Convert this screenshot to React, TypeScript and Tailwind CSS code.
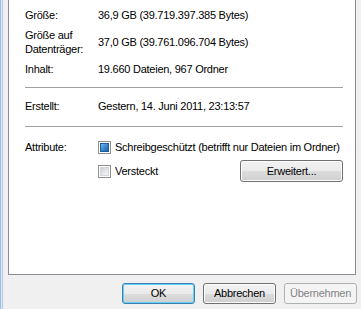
const font = { fontFamily: '"Liberation Sans", Arial, sans-serif', letterSpacing: "-0.25px" };

const Row = ({ label, children }: { label: React.ReactNode; children: React.ReactNode }) => (
  <div className="flex items-center whitespace-nowrap">
    <div className="w-[73px] shrink-0 leading-[14px]">{label}</div>
    <div className="leading-[14px]">{children}</div>
  </div>
);

const Checkbox = ({ checked }: { checked?: boolean }) => (
  <div className="w-[13px] h-[13px] shrink-0 border border-[#8e8f8f] bg-white p-[1px]">
    {checked ? (
      <div className="w-full h-full border border-[#1d5b9f] bg-gradient-to-br from-[#74b8ea] via-[#3f88d0] to-[#2263ab]" />
    ) : (
      <div className="w-full h-full border border-[#d2d5d9] bg-gradient-to-br from-[#cdd1d6] to-[#f7f7f7]" />
    )}
  </div>
);

const Button = ({
  children,
  variant = "normal",
  className = "",
}: {
  children: React.ReactNode;
  variant?: "normal" | "default" | "disabled";
  className?: string;
}) => {
  const styles = {
    normal:
      "border-[#707070] text-black bg-[linear-gradient(#f2f2f2_0%,#ebebeb_50%,#dddddd_50%,#cfcfcf_100%)] shadow-[inset_0_0_0_1px_#fcfcfc]",
    default:
      "border-[#3c7fb1] text-black bg-[linear-gradient(#f2f2f2_0%,#ebebeb_50%,#dddddd_50%,#cfcfcf_100%)] shadow-[inset_0_0_0_1px_#62d1f7]",
    disabled: "border-[#adb2b5] text-[#838383] bg-[#f4f4f4]",
  };
  return (
    <button
      type="button"
      className={`h-[21px] border rounded-[3px] text-[11px] leading-none flex items-center justify-center ${styles[variant]} ${className}`}
      style={font}
    >
      {children}
    </button>
  );
};

export default function App() {
  return (
    <div className="w-[361px] h-[309px] flex overflow-hidden text-[11px] text-black" style={font}>
      {/* window frame */}
      <div className="w-[3px] flex shrink-0">
        <div className="w-px bg-[#9fbcdc]" />
        <div className="w-px bg-[#dbe8f6]" />
        <div className="w-px bg-[#b4cbe5]" />
      </div>

      <div className="flex-1 flex flex-col bg-[#f0f0f0] pl-[5px]">
        {/* tab panel */}
        <div className="w-[348px] h-[275px] shrink-0 bg-white border-x border-b border-[#898c95] pl-[16px] pr-[12px] pt-[8px]">
          <Row label="Größe:">36,9 GB (39.719.397.385 Bytes)</Row>
          <div className="mt-[6px]">
            <Row
              label={
                <>
                  Größe auf
                  <br />
                  Datenträger:
                </>
              }
            >
              37,0 GB (39.761.096.704 Bytes)
            </Row>
          </div>
          <div className="mt-[6px]">
            <Row label="Inhalt:">19.660 Dateien, 967 Ordner</Row>
          </div>

          <div className="mt-[11px] h-px bg-[#a0a0a0]" />

          <div className="mt-[11px]">
            <Row label="Erstellt:">Gestern, 14. Juni 2011, 23:13:57</Row>
          </div>

          <div className="mt-[13px] h-px bg-[#a0a0a0]" />

          <div className="mt-[13px] flex items-center h-[14px] whitespace-nowrap">
            <div className="w-[73px] shrink-0 leading-[14px]">Attribute:</div>
            <Checkbox checked />
            <span className="ml-[4px] leading-[14px]">Schreibgeschützt (betrifft nur Dateien im Ordner)</span>
          </div>

          <div className="mt-[6px] flex items-center h-[22px]">
            <div className="w-[73px] shrink-0" />
            <Checkbox />
            <span className="ml-[4px] leading-[14px]">Versteckt</span>
            <Button className="ml-auto w-[103px] h-[22px]">Erweitert...</Button>
          </div>
        </div>

        {/* dialog buttons */}
        <div className="mt-[8px] flex justify-end gap-[8px] pr-[4px]">
          <Button variant="default" className="w-[73px]">OK</Button>
          <Button className="w-[73px]">Abbrechen</Button>
          <Button variant="disabled" className="w-[73px]">Übernehmen</Button>
        </div>
      </div>
    </div>
  );
}
